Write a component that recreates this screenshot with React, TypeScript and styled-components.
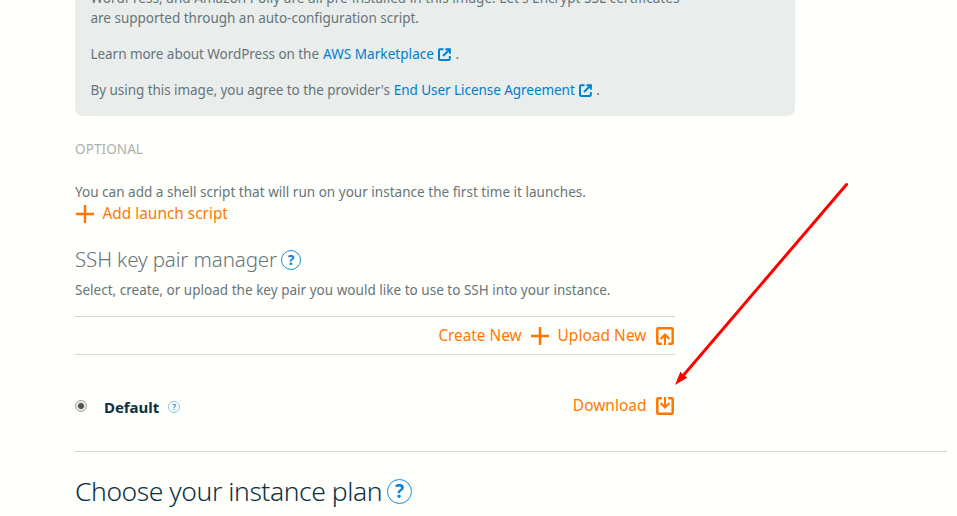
import React from "react";
import styled, { createGlobalStyle } from "styled-components";

const GlobalStyle = createGlobalStyle`
  * { box-sizing: border-box; }
  body {
    margin: 0;
    background: #fffffb;
    color: #66757c;
    font-family: "Noto Sans", "Open Sans", sans-serif;
    overflow: hidden;
  }
`;

const Page = styled.main`
  position: relative;
  width: 957px;
  height: 516px;
  padding-left: 75px;
  overflow: hidden;
`;

const Text = styled.p<{ $spacing?: number }>`
  margin: 0;
  color: #66757a;
  font-size: 13.5px;
  line-height: 20px;
  letter-spacing: ${({ $spacing = 0 }) => $spacing}px;
  white-space: nowrap;
`;

const ImagePanel = styled.section`
  display: flex;
  flex-direction: column;
  justify-content: flex-end;
  gap: 16px;
  width: 720px;
  height: 116px;
  padding: 0 15.5px 16px;
  background: #e9edec;
  border-radius: 0 0 8px 8px;
`;

const LinkLine = styled(Text)`
  display: flex;
  align-items: center;
`;

const TextLink = styled.a<{ $spacing: number }>`
  display: flex;
  align-items: center;
  gap: 4px;
  margin: 0 4.5px 0 4px;
  color: #007dcc;
  letter-spacing: ${({ $spacing }) => $spacing}px;
  text-decoration: none;
`;

const SectionLabel = styled(Text)`
  margin-top: 23px;
  color: #abb1b1;
`;

const LaunchHint = styled(Text)`
  margin-top: 23px;
`;

const Action = styled.button<{ $gap: number; $spacing?: number }>`
  display: flex;
  align-items: center;
  gap: ${({ $gap }) => $gap}px;
  height: 22px;
  padding: 0;
  border: 0;
  background: none;
  color: #ff7700;
  font: 400 15.4px/22px "Noto Sans", sans-serif;
  letter-spacing: ${({ $spacing = 0 }) => $spacing}px;
  white-space: nowrap;
`;

const AddScript = styled.div`
  padding: 1px 0 0 1px;
`;

const KeyHeading = styled.h3`
  display: flex;
  align-items: center;
  gap: 4px;
  height: 28px;
  margin: 20px 0 7px;
  color: #66757a;
  font-size: 20.5px;
  font-weight: 300;
  line-height: 28px;
  letter-spacing: -0.11px;
`;

const KeyToolbar = styled.div`
  display: flex;
  align-items: center;
  justify-content: flex-end;
  gap: 9px;
  width: 600px;
  height: 39px;
  margin-top: 16px;
  padding: 1px 1px 0 0;
  border-top: 1px solid #d3d7d6;
  border-bottom: 1px solid #d3d7d6;
`;

const KeyRow = styled.div`
  display: flex;
  align-items: flex-start;
  justify-content: space-between;
  width: 600px;
  height: 96px;
  padding: 40px 1px 0 0;
`;

const KeyOption = styled.label`
  display: flex;
  align-items: center;
  height: 22px;
  margin-top: 1px;
`;

const Radio = styled.span`
  width: 12px;
  height: 12px;
  margin: -2px 17px 0 0;
  border: 1px solid #aaa;
  border-radius: 50%;
  background: radial-gradient(circle, #555 0 2.6px, #e6e6e4 3.4px);
`;

const KeyName = styled.span`
  margin-right: 9px;
  color: #0d3042;
  font-size: 15px;
  font-weight: 700;
  line-height: 22px;
  letter-spacing: -0.04px;
`;

const Rule = styled.hr`
  width: 872px;
  height: 1px;
  margin: 0;
  border: 0;
  background: #d3d7d6;
`;

const PlanHeading = styled.h2`
  display: flex;
  align-items: center;
  gap: 5px;
  height: 36px;
  margin: 21px 0 0;
  color: #0d3042;
  font-size: 26.5px;
  font-weight: 300;
  line-height: 36px;
  letter-spacing: -0.45px;
`;

const Help = styled.span<{ $size: number; $font: number; $soft?: boolean }>`
  display: inline-flex;
  align-items: center;
  justify-content: center;
  width: ${({ $size }) => $size}px;
  height: ${({ $size }) => $size}px;
  margin-top: ${({ $soft }) => ($soft ? 0 : 1)}px;
  border: 1px solid ${({ $soft }) => ($soft ? "#8cc6ea" : "#1a8fd6")};
  border-radius: 50%;
  color: #0a84d0;
  font-size: ${({ $font }) => $font}px;
  font-weight: ${({ $soft }) => ($soft ? 600 : 700)};
  line-height: 1;
  letter-spacing: 0;
`;

const Annotation = styled.svg`
  position: absolute;
  top: 0;
  left: 0;
  pointer-events: none;
`;

const ExternalIcon = () => (
  <svg width="13" height="13" viewBox="0 0 13 13" fill="none" stroke="#0083d0" strokeWidth="2">
    <path d="M5.6 1.2H2Q1 1.2 1 2.2V11Q1 12 2 12H10.8Q11.8 12 11.8 11V8M5 8L11 2" />
    <path d="M7.4 1.2H11.9V5.7" />
  </svg>
);

const PlusIcon = () => (
  <svg width="18" height="18" viewBox="0 0 18 18" stroke="#ff7700" strokeWidth="2.5">
    <path d="M9 0V18M0 9H18" />
  </svg>
);

const UploadIcon = () => (
  <svg width="18" height="18" viewBox="0 0 18 18" fill="none" stroke="#ff7700" strokeWidth="2.5">
    <path d="M5.8 16.7H2.3Q1.3 16.7 1.3 15.7V2.3Q1.3 1.3 2.3 1.3H15.7Q16.7 1.3 16.7 2.3V15.7Q16.7 16.7 15.7 16.7H12.2" />
    <path d="M9 18V8M4.6 12L9 7.6L13.4 12" strokeWidth="2.1" />
  </svg>
);

const DownloadIcon = () => (
  <svg width="18" height="18" viewBox="0 0 18 18" fill="none" stroke="#ff7700" strokeWidth="2.5">
    <path d="M5.8 1.3H2.3Q1.3 1.3 1.3 2.3V15.7Q1.3 16.7 2.3 16.7H15.7Q16.7 16.7 16.7 15.7V2.3Q16.7 1.3 15.7 1.3H12.2" />
    <path d="M9 0V10M4.6 6L9 10.4L13.4 6" strokeWidth="2.1" />
  </svg>
);

export default function App() {
  return (
    <>
      <GlobalStyle />
      <Page>
        <ImagePanel>
          <div>
            <Text $spacing={0.054}>
              WordPress, and Amazon Polly are all pre-installed in this image. Let's Encrypt SSL certificates
            </Text>
            <Text $spacing={-0.015}>are supported through an auto-configuration script.</Text>
          </div>
          <LinkLine $spacing={-0.05}>
            Learn more about WordPress on the
            <TextLink $spacing={0.06}>AWS Marketplace <ExternalIcon /></TextLink>.
          </LinkLine>
          <LinkLine $spacing={-0.05}>
            By using this image, you agree to the provider's
            <TextLink $spacing={-0.05}>End User License Agreement <ExternalIcon /></TextLink>.
          </LinkLine>
        </ImagePanel>

        <SectionLabel $spacing={0.09}>OPTIONAL</SectionLabel>
        <LaunchHint $spacing={0.022}>
          You can add a shell script that will run on your instance the first time it launches.
        </LaunchHint>
        <AddScript>
          <Action $gap={8.5}><PlusIcon />Add launch script</Action>
        </AddScript>

        <KeyHeading>
          SSH key pair manager
          <Help $size={20} $font={14}>?</Help>
        </KeyHeading>
        <Text $spacing={0.022}>
          Select, create, or upload the key pair you would like to use to SSH into your instance.
        </Text>
        <KeyToolbar>
          <Action $gap={9} $spacing={-0.04}>Create New<PlusIcon /></Action>
          <Action $gap={9.5} $spacing={0.07}>Upload New<UploadIcon /></Action>
        </KeyToolbar>

        <KeyRow>
          <KeyOption>
            <Radio />
            <KeyName>Default</KeyName>
            <Help $size={12} $font={8.5} $soft>?</Help>
          </KeyOption>
          <Action $gap={9.5} $spacing={0.05}>Download<DownloadIcon /></Action>
        </KeyRow>

        <Rule />
        <PlanHeading>
          Choose your instance plan
          <Help $size={25} $font={19}>?</Help>
        </PlanHeading>

        <Annotation width="957" height="516" viewBox="0 0 957 516">
          <path d="M846.5 184.5L682 377" stroke="#ff0000" strokeWidth="3" strokeLinecap="round" />
          <path d="M675 385L680.5 371.5L683 374.8L687.5 377.5Z" fill="#ff0000" />
        </Annotation>
      </Page>
    </>
  );
}
